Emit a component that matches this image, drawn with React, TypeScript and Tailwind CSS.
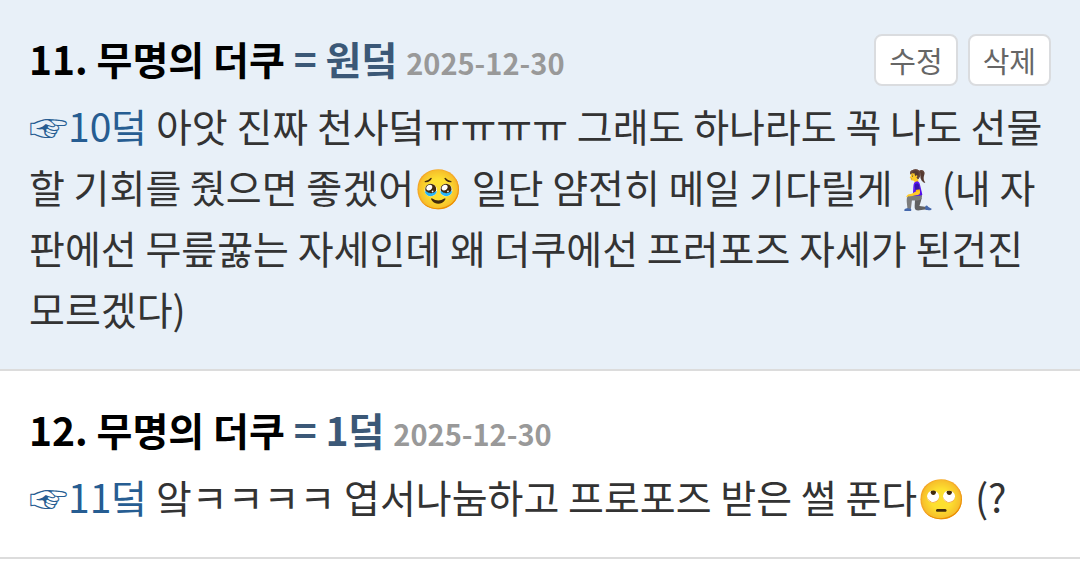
import type { ReactNode } from 'react';

type CommentProps = {
  title: string;
  relation: string;
  date: string;
  mine?: boolean;
  children: ReactNode;
};

const ACTIONS = ['수정', '삭제'];

function Comment({ title, relation, date, mine, children }: CommentProps) {
  return (
    <li className={`border-b-2 border-[#dcdcdc] px-[29px] py-[30px] ${mine ? 'bg-[#e8f0f8]' : 'bg-white'}`}>
      <header className="mb-[5px] flex h-[60px] items-center justify-between">
        <h2 className="text-[39px] leading-[60px] font-bold text-black">
          {title} <span className="text-[#3b5877]">= {relation}</span>{' '}
          <time className="text-[29px] text-[#999]">{date}</time>
        </h2>
        {mine && (
          <div className="flex gap-[10px]">
            {ACTIONS.map((label) => (
              <button
                key={label}
                type="button"
                className="h-[52px] rounded-lg border-2 border-[#dadcdf] bg-white px-[13px] text-[29px] leading-[48px] text-[#666]"
              >
                {label}
              </button>
            ))}
          </div>
        )}
      </header>
      <p className="text-[39px] leading-[61px] text-[#333]">{children}</p>
    </li>
  );
}

export default function App() {
  return (
    <ul className="font-['Noto_Sans_CJK_KR',sans-serif]">
      <Comment title="11. 무명의 더쿠" relation="원덬" date="2025-12-30" mine>
        <a href="#c10" className="text-[#265d92]">☞10덬</a> 아앗 진짜 천사덬ㅠㅠㅠㅠ 그래도 하나라도 꼭 나도 선물할 기회를 줬으면 좋겠어🥹 일단 얌전히 메일 기다릴게🧎‍♀️(내 자판에선 무릎꿇는 자세인데 왜 더쿠에선 프러포즈 자세가 된건진 모르겠다)
      </Comment>
      <Comment title="12. 무명의 더쿠" relation="1덬" date="2025-12-30">
        <a href="#c11" className="text-[#265d92]">☞11덬</a> 앜ㅋㅋㅋㅋ 엽서나눔하고 프로포즈 받은 썰 푼다🙄 (?
      </Comment>
    </ul>
  );
}
